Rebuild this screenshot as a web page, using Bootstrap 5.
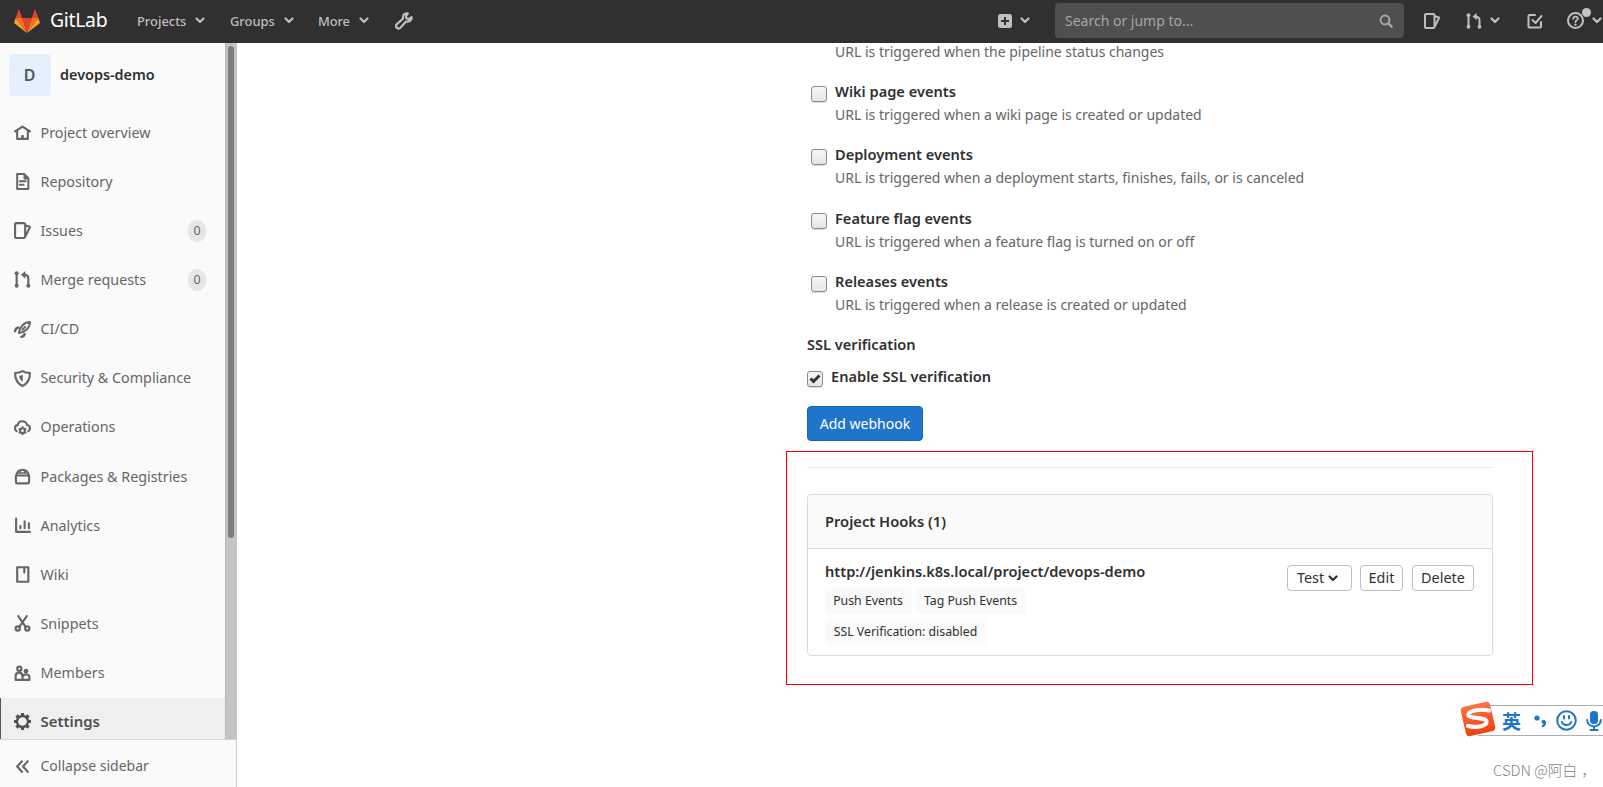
<!DOCTYPE html>
<html lang="en">
<head>
<meta charset="utf-8">
<title>Webhooks · devops-demo · GitLab</title>
<link href="https://cdn.jsdelivr.net/npm/bootstrap@5.3.0/dist/css/bootstrap.min.css" rel="stylesheet">
<style>
  body { font-family: "Noto Sans", "Open Sans", "Noto Sans CJK SC", sans-serif; font-size: 14px; line-height: 20px; color: #303030; height: 787px; overflow: hidden; background: #fff; white-space: nowrap; }
  svg { display: block; flex: none; }
  .ico { fill: none; stroke: currentColor; stroke-width: 2; stroke-linejoin: round; stroke-linecap: round; }
  .ico .f { fill: currentColor; stroke: none; }
  .topbar { height: 43px; background: #303030; color: #bfbfbf; padding: 0 1px 2px 14px; }
  .brandtext { color: #fff; font-size: 19.4px; letter-spacing: -.3px; width: 97px; padding-left: 10px; margin-top: -1px; }
  .topmenu { font-size: 12.9px; font-weight: 500; gap: 9px; }
  .m1 { width: 93px; } .m2 { width: 88px; } .m3 { width: 77px; }
  .m3 { letter-spacing: -.1px; }
  .searchbox { width: 349px; height: 35px; background: #4f4f4f; border-radius: 4px; color: #a6a6a6; padding: 0 11px 0 10px; margin: 0 20px 0 25px; }
  .gap-a { margin-left: 26px; } .gap-b { margin-left: 27px; }
  .dot { position: absolute; right: -7px; top: -4px; width: 9px; height: 9px; border-radius: 50%; background: #c4c4c4; }
  .sidebar { width: 237px; height: 744px; background: #fafafa; color: #666; }
  .menuarea { height: 696px; overflow: hidden; }
  .track { width: 12px; background: #c3c4c3; border-left: 1px solid #b4bab8; padding: 3px 2px; }
  .thumb { width: 6px; height: 492px; border-radius: 3px; background: #7b7f7f; }
  .project { height: 65px; padding: 0 0 1px 9px; color: #303030; font-size: 14.4px; font-weight: 600; }
  .avatar { width: 42px; height: 42px; background: #e4f1fc; border-radius: 4px; color: #555; font-size: 16px; margin-right: 9px; padding-right: 1px; }
  .side { height: 49.15px; padding: 0 19px 0 14px; font-size: 14.3px; }
  .side svg { margin-right: 9.5px; }
  .side.on { background: #efefef; box-shadow: inset 1px 0 #555; color: #505050; font-weight: 600; font-size: 14.9px; padding-bottom: 2px; }
  .pill { width: 18px; height: 22px; border-radius: 11px; background: #e6e6e6; font-size: 12.5px; }
  .collapsebar { height: 48px; border-top: 1px solid #d5d5d5; border-right: 1px solid #cfcfcf; padding: 5px 0 0 14px; font-size: 14px; }
  .collapsebar svg { margin-right: 9.5px; }
  .content { width: 686px; margin-left: 570px; }
  .desc { color: #666; font-size: 14px; line-height: 23px; }
  .ttl { font-weight: 600; font-size: 14.6px; line-height: 23px; }
  .hookrow { height: 63.3px; padding-left: 4px; gap: 8px; }
  .firstrow { height: 37px; padding-left: 28px; }
  .firstrow .desc { line-height: 17px; }
  .box { width: 16px; height: 16px; border: 1px solid #8b8b89; border-radius: 3px; background: linear-gradient(#f7f7f7, #e6e6e4); box-shadow: 0 1px #ddd; flex: none; margin-top: 6px; }
  .sslrow { margin: 9px 0 18px; gap: 8px; }
  .addbtn { width: 116px; height: 35px; background: #1f75cb; border: 1px solid #1068bf; border-radius: 4px; color: #fff; font-size: 14px; padding: 0; }
  .redframe { width: 747px; height: 234px; margin: 10px 0 0 -21px; padding: 15px 39px 0 20px; border: 1px solid #f00; }
  .rule { border-top: 1px solid #eaeaea; margin-bottom: 26px; }
  .hooks { height: 162px; width: 686px; border: 1px solid #dbdbdb; border-radius: 4px; }
  .hooks .card-header { height: 54px; background: #fafafa; border-bottom: 1px solid #dbdbdb; padding: 0 17px; font-size: 14.7px; }
  .hooks .card-body { padding: 12px 18px 0 17px; }
  .hookurl { margin-top: -1px; }
  .tagrow { margin: 5px 0; }
  .tagchip { height: 26px; background: #fafafa; border-radius: 4px; font-size: 12.3px; }
  .w1 { width: 87px; padding-right: 1px; } .w2 { width: 110px; padding-right: 1px; } .w3 { width: 161px; }
  .sbtn { height: 26px; border: 1px solid #bfbfbf; border-radius: 4px; background: #fff; color: #303030; font-size: 14.4px; padding: 0; line-height: 22px; }
  .b1 { width: 65px; margin-right: 8px; padding-right: 4px; } .b2 { width: 43px; margin-right: 9px; } .b3 { width: 62px; }
  .ime { position: absolute; right: 0; top: 700px; width: 145px; height: 42px; color: #1f75cb; overflow: hidden; }
  .imebar { height: 31px; margin: 5px 0 0 20px; border: solid #aaafb5; border-width: 1px 0; padding-left: 24px; gap: 9px; }
  .sogou { position: absolute; left: 2px; top: 1px; }
  .han { font: 700 19px/28px "Noto Sans CJK SC", sans-serif; }
  .csdn { position: absolute; left: 1493px; top: 760px; font: 300 14.8px/20px "Noto Sans CJK SC", sans-serif; color: #858585; }
  .csdn span { margin-left: 4px; }
</style>
</head>
<body>
<svg width="0" height="0" class="position-absolute">
  <symbol id="chev" viewBox="0 0 10 7"><path d="M1.500 1.500 5 5l3.500-3.500" fill="none" stroke="currentColor" stroke-width="2.200" stroke-linecap="round" stroke-linejoin="round"/></symbol>
  <symbol id="issue" viewBox="0 0 16 16"><path d="M2 1h7a1.500 1.500 0 0 1 1.500 1.500v11a1.500 1.500 0 0 1-1.500 1.500H2a1 1 0 0 1-1-1V2a1 1 0 0 1 1-1zM10.500 3.200l3.900 1a.8.8 0 0 1 .5 1L11 13"/></symbol>
  <symbol id="merge" viewBox="0 0 16 16"><path d="M2.500 3v10M13.500 13V7.500c0-2.500-1.200-3.800-3.500-3.800"/><g fill="currentColor" stroke="none"><circle cx="2.500" cy="2.200" r="1.900"/><circle cx="2.500" cy="13.800" r="1.900"/><circle cx="13.500" cy="13.800" r="1.900"/><path d="M10.700 0v7.200L6.500 3.600z"/></g></symbol>
</svg>

<header class="topbar d-flex align-items-center">
  <svg width="26" height="24" viewBox="0 0 26 24"><path fill="#e24329" d="M13 24 17.800 9H8.200zM5 0 8.200 9H1.600zM21 0l-3.200 9h6.600z"/><path fill="#fc6d26" d="M13 24 8.200 9H1.600zM13 24l4.800-15h6.600z"/><path fill="#fca326" d="M1.600 9 0 14l13 10zM24.400 9 26 14 13 24z"/></svg>
  <span class="brandtext">GitLab</span>
  <div class="topmenu m1 d-flex align-items-center">Projects <svg width="10" height="7"><use href="#chev"/></svg></div>
  <div class="topmenu m2 d-flex align-items-center">Groups <svg width="10" height="7"><use href="#chev"/></svg></div>
  <div class="topmenu m3 d-flex align-items-center">More <svg width="10" height="7"><use href="#chev"/></svg></div>
  <svg class="ico" width="18" height="18" viewBox="0 0 18 18"><path d="M12.800 1.400c-2-.6-4.600.8-4.800 3.400v1.800L1.800 12.200a2.500 2.500 0 0 0 3.600 3.600L11 9.600h1.600c3-.1 4.300-2.700 4-4.500l-2.700 2-2.400-.6-.5-2.300z" stroke-width="2.200"/></svg>
  <div class="ms-auto d-flex align-items-center">
    <svg width="14" height="14" viewBox="0 0 14 14"><rect width="14" height="14" rx="2.500" fill="#bfbfbf"/><path d="M7 3v8M3 7h8" stroke="#303030" stroke-width="2"/></svg>
    <svg width="10" height="7" class="ms-2"><use href="#chev"/></svg>
    <div class="searchbox d-flex align-items-center justify-content-between">Search or jump to...
      <svg class="ico" width="14" height="14" viewBox="0 0 14 14"><circle cx="6" cy="6" r="4.400"/><path d="m9.600 9.600 3 3" stroke-width="2.500"/></svg></div>
    <svg class="ico" width="16" height="16"><use href="#issue"/></svg>
    <svg class="ico gap-a" width="16" height="16"><use href="#merge"/></svg>
    <svg width="10" height="7" class="ms-2"><use href="#chev"/></svg>
    <svg class="ico gap-b" width="16" height="16" viewBox="0 0 16 16"><path d="M8 2H2.500a1 1 0 0 0-1 1v10.500a1 1 0 0 0 1 1H13a1 1 0 0 0 1-1V9M5.500 7 8.500 10l6-7"/></svg>
    <div class="position-relative ms-4"><svg class="ico" width="17" height="17" viewBox="0 0 17 17"><circle cx="8.500" cy="8.500" r="7.500"/><path d="M6.200 6.800c.2-3 4.800-2.800 4.600 0-.2 1.500-2.100 1.500-2.300 3.200" stroke-width="1.800"/><circle class="f" cx="8.500" cy="12.600" r="1.200"/></svg><span class="dot"></span></div>
    <svg width="10" height="7" class="ms-2"><use href="#chev"/></svg>
  </div>
</header>

<div class="d-flex">
  <aside class="sidebar">
    <div class="menuarea d-flex">
      <nav class="flex-grow-1">
        <div class="project d-flex align-items-center"><span class="avatar d-flex align-items-center justify-content-center">D</span>devops-demo</div>
        <div class="side d-flex align-items-center"><svg class="ico" width="17" height="17" viewBox="0 0 16 16"><path d="M1 7 8 2.500l7 4.500M3 6v8h10V6"/><path d="M8 14v-3.500" stroke-width="2.600" stroke-linecap="butt"/></svg>Project overview</div>
        <div class="side d-flex align-items-center"><svg class="ico" width="17" height="17" viewBox="0 0 16 16"><path d="M3 1h6.500L13.500 5v10H3zM5.500 7.800H11M5.500 11H9" stroke-width="1.900"/><path class="f" d="M9 1v5h5z"/></svg>Repository</div>
        <div class="side d-flex align-items-center"><svg class="ico" width="17" height="17"><use href="#issue"/></svg>Issues<span class="pill ms-auto d-flex align-items-center justify-content-center">0</span></div>
        <div class="side d-flex align-items-center"><svg class="ico" width="17" height="17"><use href="#merge"/></svg>Merge requests<span class="pill ms-auto d-flex align-items-center justify-content-center">0</span></div>
        <div class="side d-flex align-items-center"><svg class="ico" width="17" height="17" viewBox="0 0 16 16"><path d="M15 1C10 1 5.500 5 4.500 11.200 10.500 10.500 15 6.500 15 1zM10.500 5.500 8 8" stroke-width="1.900"/><path d="M4 6.200C2.500 6.500 1.300 7.800 1 9.500M10 12.400c-.4 1.400-1.500 2.300-3 2.600" stroke-width="2.400"/></svg>CI/CD</div>
        <div class="side d-flex align-items-center"><svg class="ico" width="17" height="17" viewBox="0 0 16 16"><path d="M8 1c2 1.300 4.200 1.800 7 1.800 0 6-1.500 9.700-7 12.200C2.500 12.500 1 8.800 1 2.800 3.800 2.800 6 2.300 8 1z"/><path class="f" d="M8.300 4.500v6.500C6 9.500 5 8 4.800 5.500 6.200 5.300 7.200 5 8.300 4.500z"/></svg>Security &amp; Compliance</div>
        <div class="side d-flex align-items-center"><svg class="ico" width="17" height="17" viewBox="0 0 16 16"><path d="M2.500 11.500C-.2 9.500.8 6 3.500 5.800 4.200 1 11 .8 12.300 5.600c3.200.4 3.500 4.400 1.200 5.900"/><circle cx="8" cy="11" r="2.300"/><path d="M8 7.400v1M8 13.600v1M4.900 9.200l.9.500M10.200 12.300l.9.500M4.900 12.800l.9-.5M10.200 9.700l.9-.5" stroke-width="1.500"/></svg>Operations</div>
        <div class="side d-flex align-items-center"><svg class="ico" width="17" height="17" viewBox="0 0 16 16"><path d="M1.800 7h12.400v6.500a1 1 0 0 1-1 1H2.800a1 1 0 0 1-1-1zM2 7c.8-3.200 2.500-5.300 6-5.300S13.200 3.800 14 7"/><path d="M4 4.700h8M6 2v3M10 2v3" stroke-width="1.300"/></svg>Packages &amp; Registries</div>
        <div class="side d-flex align-items-center"><svg class="ico" width="17" height="17" viewBox="0 0 16 16"><path d="M2 1.500v12.500h13M6 8.500v2M10 4v6.500M14 6v4.500"/></svg>Analytics</div>
        <div class="side d-flex align-items-center"><svg class="ico" width="17" height="17" viewBox="0 0 16 16"><path d="M3 1.200h10.500v13.600H3zM9.700 1.500V6"/></svg>Wiki</div>
        <div class="side d-flex align-items-center"><svg class="ico" width="17" height="17" viewBox="0 0 16 16"><path d="m4 1 6.800 10M12 1 5.200 11"/><circle cx="3.500" cy="12.700" r="2"/><circle cx="12.500" cy="12.700" r="2"/></svg>Snippets</div>
        <div class="side d-flex align-items-center"><svg class="ico" width="17" height="17" viewBox="0 0 16 16"><circle cx="5" cy="3.500" r="2"/><path d="M1.500 14V10.500c0-4.500 6.500-4.500 6.500 0V14zM8 14h6.500v-2.500c0-3-4.500-3.500-6-1"/><circle class="f" cx="11.300" cy="5.800" r="2.200"/></svg>Members</div>
        <div class="side on d-flex align-items-center"><svg class="ico" width="17" height="17" viewBox="0 0 16 16"><circle cx="8" cy="8" r="5.200" stroke-width="2.200"/><path d="M8 0v2.500M8 13.500V16M0 8h2.500M13.500 8H16M2.300 2.300 4 4M12 12l1.700 1.700M2.300 13.700 4 12M12 4l1.700-1.700" stroke-width="3" stroke-linecap="butt"/></svg>Settings</div>
      </nav>
      <div class="track"><div class="thumb"></div></div>
    </div>
    <div class="collapsebar d-flex align-items-center"><svg class="ico" width="17" height="17" viewBox="0 0 16 16"><path d="M7.500 3 3 8l4.500 5M13 3 8.500 8l4.500 5"/></svg>Collapse sidebar</div>
  </aside>

  <main class="content">
    <div class="firstrow"><div class="desc">URL is triggered when the pipeline status changes</div></div>
    <div class="hookrow d-flex"><span class="box"></span><div><div class="ttl">Wiki page events</div><div class="desc">URL is triggered when a wiki page is created or updated</div></div></div>
    <div class="hookrow d-flex"><span class="box"></span><div><div class="ttl">Deployment events</div><div class="desc">URL is triggered when a deployment starts, finishes, fails, or is canceled</div></div></div>
    <div class="hookrow d-flex"><span class="box"></span><div><div class="ttl">Feature flag events</div><div class="desc">URL is triggered when a feature flag is turned on or off</div></div></div>
    <div class="hookrow d-flex"><span class="box"></span><div><div class="ttl">Releases events</div><div class="desc">URL is triggered when a release is created or updated</div></div></div>
    <div class="ttl">SSL verification</div>
    <div class="sslrow d-flex"><span class="box d-flex align-items-center justify-content-center"><svg width="12" height="10" viewBox="0 0 12 10"><path d="m1.500 4.500 3 3L10.500 1.500" fill="none" stroke="#2e3436" stroke-width="3"/></svg></span><span class="ttl">Enable SSL verification</span></div>
    <button class="btn addbtn d-block">Add webhook</button>
    <div class="redframe">
      <div class="rule"></div>
      <div class="card hooks">
        <div class="card-header d-flex align-items-center ttl">Project Hooks (1)</div>
        <div class="card-body d-flex justify-content-between align-items-start">
          <div>
            <div class="ttl hookurl">http://jenkins.k8s.local/project/devops-demo</div>
            <div class="tagrow d-flex gap-1"><span class="tagchip w1 d-flex align-items-center justify-content-center">Push Events</span><span class="tagchip w2 d-flex align-items-center justify-content-center">Tag Push Events</span></div>
            <span class="tagchip w3 d-flex align-items-center justify-content-center">SSL Verification: disabled</span>
          </div>
          <div class="d-flex mt-1">
            <button class="btn sbtn b1 d-flex align-items-center justify-content-center gap-1">Test <svg width="10" height="7"><use href="#chev"/></svg></button>
            <button class="btn sbtn b2">Edit</button>
            <button class="btn sbtn b3">Delete</button>
          </div>
        </div>
      </div>
    </div>
  </main>
</div>

<div class="ime">
  <div class="imebar d-flex align-items-center">
    <span class="han">英</span>
    <svg width="13" height="14" viewBox="0 0 13 14" class="ms-1"><circle cx="3" cy="4" r="2.600" fill="currentColor"/><path d="M10.500 7.500c.8 2 0 4-2.500 5" fill="none" stroke="currentColor" stroke-width="2.200"/><circle cx="9.500" cy="7.700" r="2" fill="currentColor"/></svg>
    <svg class="ico" width="21" height="21" viewBox="0 0 21 21"><circle cx="10.500" cy="10.500" r="9.300"/><path d="M8 6v2.500M13 6v2.500M5.800 12c1.500 4 7.900 4 9.400 0"/></svg>
    <svg class="ico" width="16" height="20" viewBox="0 0 16 20"><rect class="f" x="4" y="0" width="8" height="13" rx="3.500"/><path d="M1.200 9c0 8.500 13.600 8.500 13.600 0M8 16v3M4.500 19h7"/></svg>
  </div>
  <svg class="sogou" width="36" height="36" viewBox="0 0 36 36"><defs><linearGradient id="og" x2="0" y2="1"><stop stop-color="#ff7043"/><stop offset="1" stop-color="#ee4310"/></linearGradient></defs><rect x="3" y="3" width="30" height="30" rx="4" transform="rotate(-13 18 18)" fill="url(#og)"/><path d="M29 9.500C19 7.500 8 10 8.500 14c.6 4 17.500 2 18 6.500.4 4.500-9 6.500-18.500 4.500" fill="none" stroke="#fff" stroke-width="4.200" stroke-linecap="round"/></svg>
</div>
<div class="csdn">CSDN @阿白<span>，</span></div>
<script src="https://cdn.jsdelivr.net/npm/bootstrap@5.3.0/dist/js/bootstrap.bundle.min.js"></script>
</body>
</html>
